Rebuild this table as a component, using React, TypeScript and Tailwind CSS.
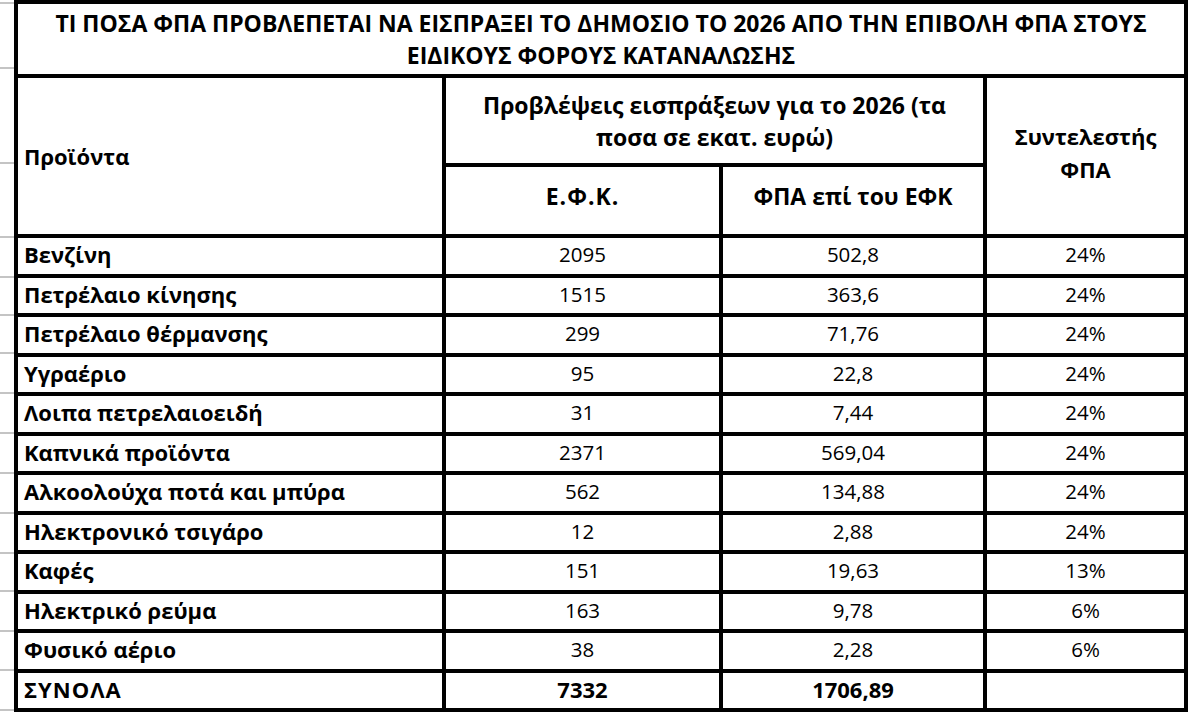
const rows = [
  ["Βενζίνη", "2095", "502,8", "24%"],
  ["Πετρέλαιο κίνησης", "1515", "363,6", "24%"],
  ["Πετρέλαιο θέρμανσης", "299", "71,76", "24%"],
  ["Υγραέριο", "95", "22,8", "24%"],
  ["Λοιπα πετρελαιοειδή", "31", "7,44", "24%"],
  ["Καπνικά προϊόντα", "2371", "569,04", "24%"],
  ["Αλκοολούχα ποτά και μπύρα", "562", "134,88", "24%"],
  ["Ηλεκτρονικό τσιγάρο", "12", "2,88", "24%"],
  ["Καφές", "151", "19,63", "13%"],
  ["Ηλεκτρικό ρεύμα", "163", "9,78", "6%"],
  ["Φυσικό αέριο", "38", "2,28", "6%"],
];

// spreadsheet row lines peeking out left of the table
const ticks = [
  "h-[4px]", "h-[65px]", "h-[95px]", "h-[74px]", "h-[40px]", "h-[38px]",
  "h-[38px]", "h-[40px]", "h-[40px]", "h-[40px]", "h-[40px]", "h-[40px]",
  "h-[38px]", "h-[40px]", "h-[39px]", "h-[40px]",
];

export default function App() {
  return (
    <div className="flex w-[1198px] h-[724px] bg-white text-black font-['Open_Sans',sans-serif] overflow-hidden">
      <div className="flex flex-col w-[14px] shrink-0">
        {ticks.map((h, i) => (
          <div key={i} className={`${h} border-b-2 border-[#c4c4c4]`} />
        ))}
      </div>

      <div className="self-start grid grid-cols-[424px_273px_260px_197px] grid-rows-[70px_85px_67px_repeat(12,35.5px)] gap-[4px] p-[4px] bg-black">
        <div className="col-span-4 bg-white flex items-center justify-center text-center font-bold text-[23px] leading-[32px]">
          ΤΙ ΠΟΣΑ ΦΠΑ ΠΡΟΒΛΕΠΕΤΑΙ ΝΑ ΕΙΣΠΡΑΞΕΙ ΤΟ ΔΗΜΟΣΙΟ ΤΟ 2026 ΑΠΟ ΤΗΝ ΕΠΙΒΟΛΗ ΦΠΑ ΣΤΟΥΣ
          <br />
          ΕΙΔΙΚΟΥΣ ΦΟΡΟΥΣ ΚΑΤΑΝΑΛΩΣΗΣ
        </div>

        <div className="row-span-2 bg-white flex items-center px-[6px] font-bold text-[22px]">
          Προϊόντα
        </div>
        <div className="col-span-2 bg-white flex items-center justify-center text-center font-bold text-[23px] leading-[32px]">
          Προβλέψεις εισπράξεων για το 2026 (τα
          <br />
          ποσα σε εκατ. ευρώ)
        </div>
        <div className="row-span-2 bg-white flex items-center justify-center text-center font-bold text-[22px] leading-[33px] pb-[7px]">
          Συντελεστής
          <br />
          ΦΠΑ
        </div>
        <div className="bg-white flex items-center justify-center font-bold text-[23px] tracking-[1px] pb-[8px]">
          Ε.Φ.Κ.
        </div>
        <div className="bg-white flex items-center justify-center font-bold text-[23px] pb-[8px]">
          ΦΠΑ επί του ΕΦΚ
        </div>

        {rows.map((r) => (
          <div key={r[0]} className="contents">
            <div className="bg-white flex items-center px-[6px] pb-[2px] font-bold text-[22px]">{r[0]}</div>
            <div className="bg-white flex items-center justify-center pb-[2px] text-[20.5px]">{r[1]}</div>
            <div className="bg-white flex items-center justify-center pb-[2px] text-[20.5px]">{r[2]}</div>
            <div className="bg-white flex items-center justify-center pb-[2px] text-[20.5px]">{r[3]}</div>
          </div>
        ))}

        <div className="bg-white flex items-center px-[6px] pb-[2px] font-bold text-[22px] tracking-[1px]">ΣΥΝΟΛΑ</div>
        <div className="bg-white flex items-center justify-center pb-[2px] font-bold text-[22px]">7332</div>
        <div className="bg-white flex items-center justify-center pb-[2px] font-bold text-[22px]">1706,89</div>
        <div className="bg-white" />
      </div>
    </div>
  );
}
